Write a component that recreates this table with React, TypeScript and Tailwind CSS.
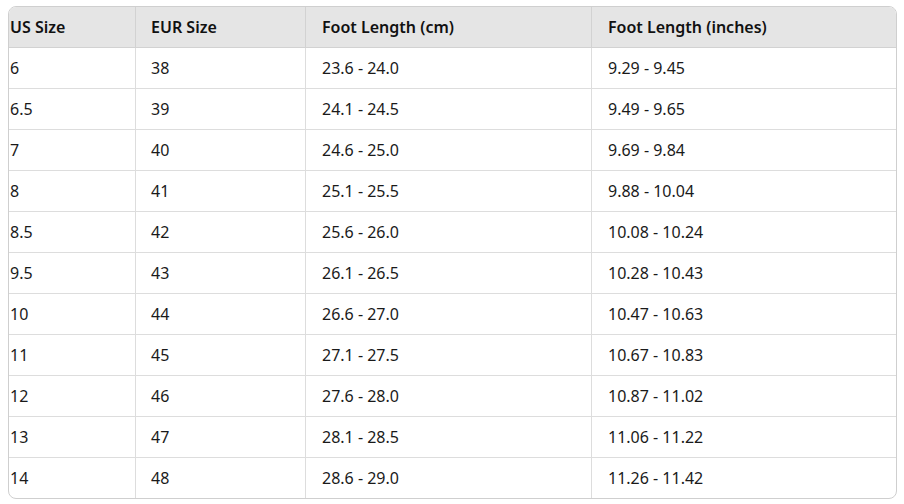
import React from 'react';

// widths include the right border (border-box)
const COLS = ['w-[127px] pl-[1px]', 'w-[170px] pl-[15px]', 'w-[286px] pl-[16px]', 'w-[304px] pl-[16px]'];

const HEADERS = ['US Size', 'EUR Size', 'Foot Length (cm)', 'Foot Length (inches)'];

const ROWS = [
  ['6', '38', '23.6 - 24.0', '9.29 - 9.45'],
  ['6.5', '39', '24.1 - 24.5', '9.49 - 9.65'],
  ['7', '40', '24.6 - 25.0', '9.69 - 9.84'],
  ['8', '41', '25.1 - 25.5', '9.88 - 10.04'],
  ['8.5', '42', '25.6 - 26.0', '10.08 - 10.24'],
  ['9.5', '43', '26.1 - 26.5', '10.28 - 10.43'],
  ['10', '44', '26.6 - 27.0', '10.47 - 10.63'],
  ['11', '45', '27.1 - 27.5', '10.67 - 10.83'],
  ['12', '46', '27.6 - 28.0', '10.87 - 11.02'],
  ['13', '47', '28.1 - 28.5', '11.06 - 11.22'],
  ['14', '48', '28.6 - 29.0', '11.26 - 11.42'],
];

export default function App() {
  return (
    <div className="w-[904px] h-[504px] bg-white pt-[6px] pl-[8px] font-['Segoe_UI','Noto_Sans',sans-serif]">
      <div className="w-[889px] border border-[#cfcfcf] rounded-[8px] overflow-hidden">
        {/* header */}
        <div className="flex bg-[#e5e5e5] border-b border-[#d2d2d2] h-[41px]">
          {HEADERS.map((h, i) => (
            <div
              key={h}
              className={`${COLS[i]} shrink-0 flex items-center text-[16px] font-semibold text-[#111] ${
                i < 3 ? 'border-r border-[#d2d2d2]' : ''
              }`}
            >
              {h}
            </div>
          ))}
        </div>
        {ROWS.map((row, r) => (
          <div
            key={row[0]}
            className={`flex ${r < ROWS.length - 1 ? 'border-b border-[#dddddd] h-[41px]' : 'h-[40px]'}`}
          >
            {row.map((c, i) => (
              <div
                key={i}
                className={`${COLS[i]} shrink-0 flex items-center text-[16px] text-[#1a1a1a] ${
                  i < 3 ? 'border-r border-[#dddddd]' : ''
                }`}
              >
                {c}
              </div>
            ))}
          </div>
        ))}
      </div>
    </div>
  );
}
